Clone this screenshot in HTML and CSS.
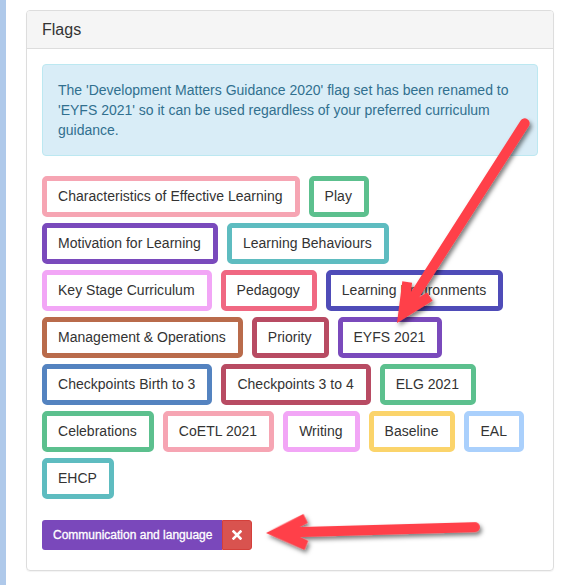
FILE: index.html
```html
<!DOCTYPE html>
<html lang="en">
<head>
    <meta charset="UTF-8">
    <meta name="viewport" content="width=device-width, initial-scale=1.0">
    <title>Flags</title>
    <link rel="stylesheet" href="styles.css">
</head>
<body>

<div class="page">
    <div class="panel">
        <div class="panel-heading">
            <h3 class="panel-title">Flags</h3>
        </div>
        <div class="panel-body">
            <div class="alert-info">
                The 'Development Matters Guidance 2020' flag set has been renamed to 'EYFS 2021' so it can be used regardless of your preferred curriculum guidance.
            </div>

            <div class="flag-list">
                <span class="flag pink">Characteristics of Effective Learning</span>
                <span class="flag green">Play</span>
                <span class="flag purple">Motivation for Learning</span>
                <span class="flag teal">Learning Behaviours</span>
                <span class="flag violet">Key Stage Curriculum</span>
                <span class="flag rose">Pedagogy</span>
                <span class="flag indigo">Learning Environments</span>
                <span class="flag brown">Management &amp; Operations</span>
                <span class="flag crimson">Priority</span>
                <span class="flag purple">EYFS 2021</span>
                <span class="flag blue">Checkpoints Birth to 3</span>
                <span class="flag crimson">Checkpoints 3 to 4</span>
                <span class="flag green">ELG 2021</span>
                <span class="flag green">Celebrations</span>
                <span class="flag pink">CoETL 2021</span>
                <span class="flag violet">Writing</span>
                <span class="flag yellow">Baseline</span>
                <span class="flag sky">EAL</span>
                <span class="flag teal">EHCP</span>
            </div>

            <div class="selected-flag">
                <span class="selected-name">Communication and language</span>
                <button class="remove-btn" title="Remove">
                    <svg width="10" height="10" viewBox="0 0 10 10">
                        <path d="M1.5 1.5 L8.5 8.5 M8.5 1.5 L1.5 8.5" stroke="#fff" stroke-width="2.6" stroke-linecap="square"/>
                    </svg>
                </button>
            </div>
        </div>
    </div>

    <!-- annotation arrows drawn over the screenshot -->
    <svg class="arrows" width="566" height="585" viewBox="0 0 566 585">
        <defs>
            <filter id="shadow" x="-20%" y="-20%" width="140%" height="140%">
                <feDropShadow dx="2" dy="3" stdDeviation="2.2" flood-color="#000" flood-opacity="0.5"/>
            </filter>
        </defs>
        <g filter="url(#shadow)" fill="#ff414a" stroke="#ff414a">
            <g transform="translate(397 323) rotate(-57.4)">
                <line x1="20" y1="0" x2="237" y2="0" stroke-width="10" stroke-linecap="round"/>
                <polygon points="0,0 38,-18 42,-9 30,-3 30,3 42,9 38,18" stroke="none"/>
            </g>
            <g transform="translate(266 533) rotate(-1.6)">
                <line x1="20" y1="0" x2="209" y2="0" stroke-width="10" stroke-linecap="round"/>
                <polygon points="0,0 38,-18 42,-9 30,-3 30,3 42,9 38,18" stroke="none"/>
            </g>
        </g>
    </svg>
</div>

</body>
</html>
```

FILE: styles.css
```css
body {
    margin: 0;
    font-family: "Liberation Sans", Arial, sans-serif;
    font-size: 14px;
    color: #333;
    background-color: white;
}
.page {
    position: relative;
    min-height: 585px;
    box-sizing: border-box;
    border-left: 6px solid #afc9ea;
    padding: 10px 12px 0 20px;
}
.panel {
    width: 528px;
    box-sizing: border-box;
    border: 1px solid #ddd;
    border-radius: 4px;
    box-shadow: 0 1px 1px rgba(0, 0, 0, 0.05);
}
.panel-heading {
    background-color: #f5f5f5;
    border-bottom: 1px solid #ddd;
    padding: 10px 15px;
    border-radius: 3px 3px 0 0;
}
.panel-title {
    margin: 0;
    font-size: 16px;
    font-weight: normal;
    line-height: 17px;
}
.panel-body {
    padding: 15px;
}
.alert-info {
    background-color: #d9edf7;
    border: 1px solid #bce8f1;
    color: #31708f;
    border-radius: 4px;
    padding: 15px;
    line-height: 20px;
    margin-bottom: 20px;
}
.flag-list {
    display: flex;
    flex-wrap: wrap;
    column-gap: 9px;
    row-gap: 6px;
}
.flag {
    display: inline-block;
    background-color: white;
    border: 5px solid #ccc;
    border-radius: 5px;
    padding: 6px 12px 6px 11px;
    line-height: 19px;
    letter-spacing: 0.02px;
}
.flag.pink { border-color: #f6a5b3; }
.flag.green { border-color: #5cc08e; }
.flag.purple { border-color: #7a4abc; }
.flag.teal { border-color: #5ebcc0; }
.flag.violet { border-color: #f2a6f6; }
.flag.rose { border-color: #f06882; }
.flag.indigo { border-color: #4f4cb8; }
.flag.brown { border-color: #b96b4b; }
.flag.crimson { border-color: #b84b63; }
.flag.blue { border-color: #5483c0; }
.flag.yellow { border-color: #fbd46b; }
.flag.sky { border-color: #aad0fc; }
.selected-flag {
    display: flex;
    margin-top: 21px;
    margin-bottom: 5px;
    height: 30px;
}
.selected-name {
    display: flex;
    align-items: center;
    background-color: #7a48bb;
    color: white;
    font-size: 12px;
    font-weight: normal;
    -webkit-text-stroke: 0.3px white;
    padding: 0 10px 0 11px;
    border-radius: 3px 0 0 3px;
}
.remove-btn {
    display: flex;
    align-items: center;
    justify-content: center;
    width: 30px;
    padding: 0;
    background-color: #d9534f;
    border: 1px solid #d43f3a;
    border-radius: 0 3px 3px 0;
    cursor: pointer;
}
.arrows {
    position: absolute;
    top: 0;
    left: -6px;
    pointer-events: none;
}
```
